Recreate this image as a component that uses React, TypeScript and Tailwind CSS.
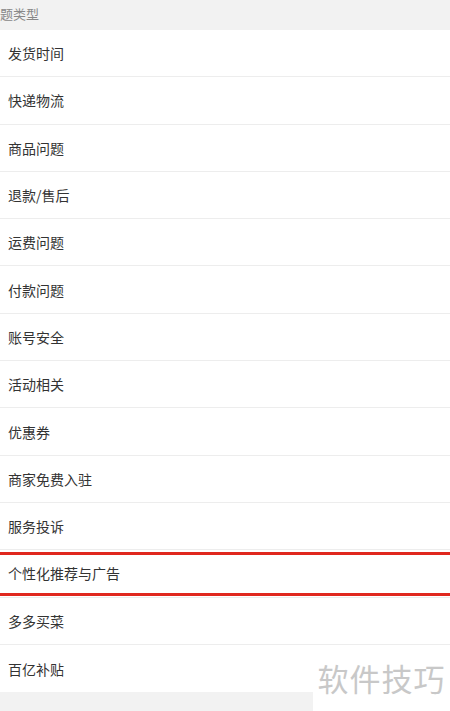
const items = [
  '发货时间',
  '快递物流',
  '商品问题',
  '退款/售后',
  '运费问题',
  '付款问题',
  '账号安全',
  '活动相关',
  '优惠券',
  '商家免费入驻',
  '服务投诉',
  '个性化推荐与广告',
  '多多买菜',
  '百亿补贴',
]

const highlighted = '个性化推荐与广告'

export default function App() {
  return (
    <div
      className="relative w-[450px] h-[711px] overflow-hidden bg-[#f2f2f2]"
      style={{ fontFamily: '"Noto Sans CJK SC", "Noto Sans", sans-serif' }}
    >
      {/* section header (scrolled slightly left in the shot) */}
      <div className="h-[30px] flex items-center pb-[2px] text-[13px] text-[#888]">
        题类型
      </div>

      {/* type list */}
      <div>
        {items.map((item, i) => (
          <div
            key={item}
            className={`relative h-[47.3px] flex items-center pl-2 pt-[1px] bg-white text-[14px] text-[#333] ${
              i < items.length - 1 ? 'border-b border-[#ededed]' : ''
            }`}
          >
            {item}
            {item === highlighted && (
              <div className="absolute -left-2 -right-2 top-[2px] bottom-[1px] border-y-[3px] border-[#e0281e]"></div>
            )}
          </div>
        ))}
      </div>

      {/* watermark */}
      <div className="absolute right-0 bottom-0 w-[137px] h-[66px] bg-white flex items-center justify-center text-[31px] text-[#c8c8c8] tracking-[1px]">
        软件技巧
      </div>
    </div>
  )
}
